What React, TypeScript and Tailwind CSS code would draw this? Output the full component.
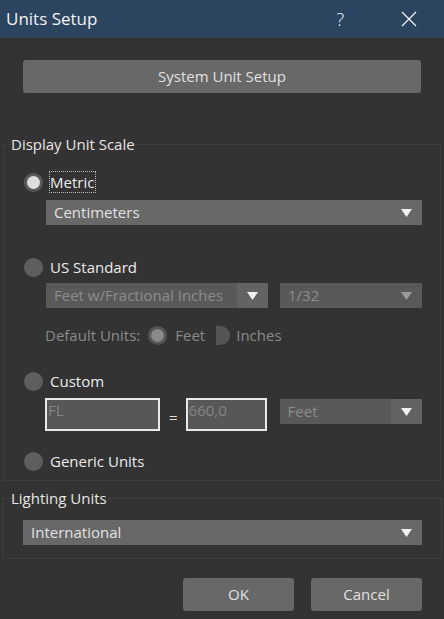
import React from "react";

const font = { fontFamily: '"Open Sans", "Noto Sans", sans-serif' };

function Arrow({ dim = false }: { dim?: boolean }) {
  return (
    <svg width="11" height="8" viewBox="0 0 11 8" aria-hidden="true">
      <path d="M0 0h11L5.5 8z" fill={dim ? "#9a9a9a" : "#f0f0f0"} />
    </svg>
  );
}

function Dropdown({
  label,
  className,
  disabled = false,
  splitArrow = false,
}: {
  label: string;
  className: string;
  disabled?: boolean;
  splitArrow?: boolean;
}) {
  return (
    <div
      className={`flex h-[25px] items-stretch ${
        disabled ? "bg-[#595959] text-[#8c8c8c]" : "bg-[#686868] text-[#e2e2e2]"
      } ${className}`}
    >
      <span className="flex-1 truncate pl-[8px] text-[15px] leading-[25px]">{label}</span>
      <span
        className={`flex w-[31px] items-center justify-center ${
          splitArrow ? "bg-[#636363]" : ""
        }`}
      >
        <Arrow dim={disabled && !splitArrow} />
      </span>
    </div>
  );
}

function Radio({ checked = false, dim = false }: { checked?: boolean; dim?: boolean }) {
  if (!checked) return <span className="block h-[19px] w-[19px] rounded-full bg-[#5e5e5e]" />;
  return (
    <span
      className={`flex h-[19px] w-[19px] items-center justify-center rounded-full ${
        dim ? "bg-[#555555]" : "bg-[#5a5a5a]"
      }`}
    >
      <span
        className={`block h-[13px] w-[13px] rounded-full ${
          dim ? "bg-[#8a8a8a]" : "bg-[#dedede]"
        }`}
      />
    </span>
  );
}

function RadioRow({
  label,
  checked,
  focused,
  className,
}: {
  label: string;
  checked?: boolean;
  focused?: boolean;
  className: string;
}) {
  return (
    <div className={`flex h-[22px] items-center ${className}`}>
      <Radio checked={checked} />
      <span
        className={`ml-[6px] text-[15px] leading-[20px] text-[#ececec] ${
          focused ? "border border-dotted border-[#bdbdbd] pr-[1px]" : "border border-transparent"
        }`}
      >
        {label}
      </span>
    </div>
  );
}

export default function App() {
  return (
    <div className="flex h-[619px] w-[444px] flex-col overflow-hidden bg-[#333333]" style={font}>
      <div className="flex h-[38px] items-center bg-[#2b4560] pl-[6px] text-[#f2f2f2]">
        <span className="flex-1 text-[17px]">Units Setup</span>
        <span className="mr-[57px] text-[18px] font-light">?</span>
        <svg width="16" height="16" viewBox="0 0 16 16" className="mr-[27px]" aria-hidden="true">
          <path d="M1 1l14 14M15 1L1 15" stroke="#f2f2f2" strokeWidth="1.3" />
        </svg>
      </div>

      <button
        type="button"
        className="mx-[23px] mt-[22px] h-[33px] rounded-[3px] bg-[#686868] text-[15px] text-[#e0e0e0]"
      >
        System Unit Setup
      </button>

      <fieldset className="mx-[3px] mt-[41px] h-[347px] border border-[#3e3e3e] px-0">
        <legend className="ml-[7px] text-[15px] leading-[20px] text-[#e6e6e6]">Display Unit Scale</legend>

        <RadioRow label="Metric" checked focused className="ml-[20px] mt-[17px]" />
        <Dropdown label="Centimeters" className="ml-[42px] mr-[18px] mt-[7px]" />

        <RadioRow label="US Standard" className="ml-[20px] mt-[31px]" />
        <div className="ml-[42px] mr-[18px] mt-[5px] flex gap-[12px]">
          <Dropdown label="Feet w/Fractional Inches" className="w-[222px]" disabled splitArrow />
          <Dropdown label="1/32" className="flex-1" disabled />
        </div>

        <div className="ml-[41px] mt-[16px] flex h-[22px] items-center text-[15px] text-[#8a8a8a]">
          <span>Default Units:</span>
          <span className="ml-[8px]">
            <Radio checked dim />
          </span>
          <span className="ml-[8px]">Feet</span>
          <span className="ml-[11px] block h-[19px] w-[14px] rounded-r-full bg-[#555555]" />
          <span className="ml-[6px]">Inches</span>
        </div>

        <RadioRow label="Custom" className="ml-[20px] mt-[24px]" />
        <div className="ml-[41px] mr-[18px] mt-[6px] flex items-start">
          <div className="h-[33px] w-[115px] border-2 border-[#e8e8e8] bg-[#575757] pl-[1px] text-[15px] leading-[20px] text-[#858585]">
            FL
          </div>
          <span className="ml-[9px] mr-[8px] mt-[8px] text-[15px] text-[#e0e0e0]">=</span>
          <div className="h-[33px] w-[81px] border-2 border-[#e8e8e8] bg-[#575757] pl-[1px] text-[15px] leading-[20px] text-[#858585]">
            660,0
          </div>
          <Dropdown label="Feet" className="ml-[13px] mt-[1px] flex-1" disabled splitArrow />
        </div>

        <RadioRow label="Generic Units" className="ml-[20px] mt-[19px]" />
      </fieldset>

      <fieldset className="mx-[2px] mt-[7px] h-[71px] border border-[#3e3e3e] px-0">
        <legend className="ml-[8px] text-[15px] leading-[20px] text-[#e6e6e6]">Lighting Units</legend>
        <Dropdown label="International" className="ml-[20px] mr-[19px] mt-[12px]" />
      </fieldset>

      <div className="mr-[22px] mt-[19px] flex justify-end gap-[17px]">
        <button type="button" className="h-[33px] w-[111px] rounded-[3px] bg-[#686868] text-[15px] text-[#e0e0e0]">
          OK
        </button>
        <button type="button" className="h-[33px] w-[111px] rounded-[3px] bg-[#686868] text-[15px] text-[#e0e0e0]">
          Cancel
        </button>
      </div>
    </div>
  );
}
